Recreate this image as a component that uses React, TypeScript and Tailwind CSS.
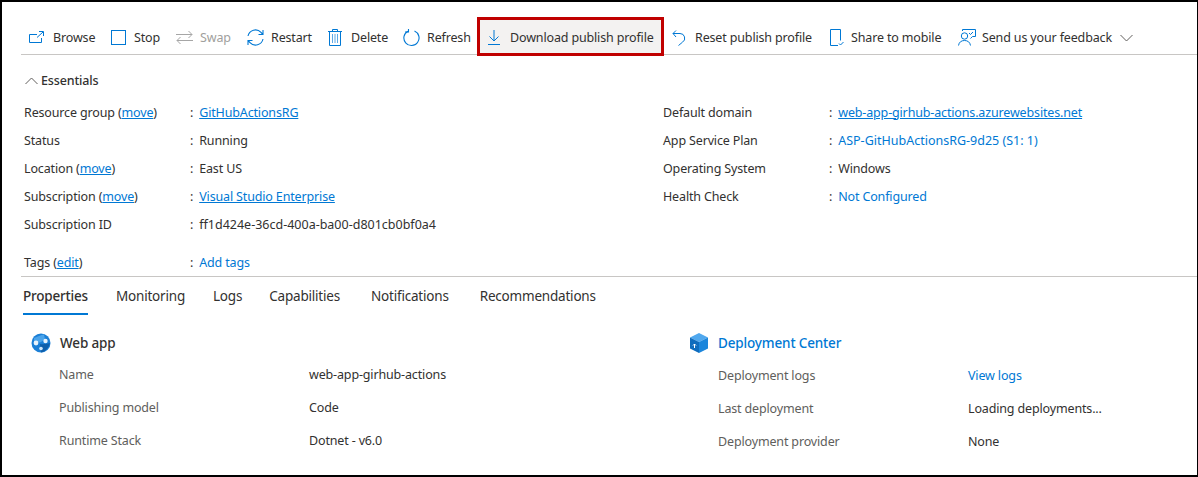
const link = "text-[#0078d4]";
const linkU = "text-[#0078d4] underline";

function BrowseIcon() {
  return (
    <svg width="15" height="13" viewBox="0 0 15 13" fill="none" stroke="#0078d4" strokeWidth="1">
      <path d="M8 3.500H.5v8h12V7" />
      <path d="M8 6.500 14 1M10 .5h4.500V5" />
    </svg>
  );
}
function StopIcon() {
  return (
    <svg width="15" height="15" viewBox="0 0 15 15" fill="none" stroke="#0078d4">
      <rect x=".5" y=".5" width="14" height="14" />
    </svg>
  );
}
function SwapIcon() {
  return (
    <svg width="17" height="15" viewBox="0 0 17 15" fill="none" stroke="#a6a6a6">
      <path d="M0 4.500h16M12.500 1 16 4.500 12.500 8M17 10.500H1M4.500 7 1 10.500 4.500 14" />
    </svg>
  );
}
function RestartIcon() {
  return (
    <svg width="17" height="17" viewBox="0 0 17 17" fill="none" stroke="#0078d4" strokeWidth="1.1">
      <path d="M1 7a7.600 7.600 0 0 1 13-3.600l1.500 1.600M16 1v4.500h-4.500" />
      <path d="M16 10a7.600 7.600 0 0 1-13 3.600L1.500 12M1 16v-4.500h4.500" />
    </svg>
  );
}
function DeleteIcon() {
  return (
    <svg width="14" height="17" viewBox="0 0 14 17" fill="none" stroke="#0078d4">
      <path d="M0 2.500h14M4.500 2.500V.5h5v2M1.500 2.500v14h11v-14" />
      <path d="M4.500 5v9M7 5v9M9.500 5v9" stroke="#5ea9e6" />
    </svg>
  );
}
function RefreshIcon() {
  return (
    <svg width="17" height="18" viewBox="0 0 17 18" fill="none" stroke="#0078d4" strokeWidth="1.1">
      <path d="M5 2.200a7.600 7.600 0 1 0 6.500-.2" />
      <path d="M5.500 0v3H2" />
    </svg>
  );
}
function DownloadIcon() {
  return (
    <svg width="12" height="15" viewBox="0 0 12 15" fill="none" stroke="#0078d4">
      <path d="M6 0v10.500M1.500 6.500 6 11l4.500-4.500M0 14.500h12" />
    </svg>
  );
}
function ResetIcon() {
  return (
    <svg width="14" height="16" viewBox="0 0 14 16" fill="none" stroke="#0078d4">
      <path d="M1 3.500h7a4.700 4.700 0 0 1 2.500 8.700L6.500 15.500" />
      <path d="M4 .5 1 3.500 4 7" />
    </svg>
  );
}
function MobileIcon() {
  return (
    <svg width="14" height="17" viewBox="0 0 14 17" fill="none" stroke="#0078d4">
      <path d="M8 16.500H.5V.5h10v11" />
      <path d="m9 14.500 1.500 1.500 3-3" />
    </svg>
  );
}
function FeedbackIcon() {
  return (
    <svg width="18" height="17" viewBox="0 0 18 17" fill="none" stroke="#0078d4">
      <path d="M4.500 2V.5h13v7h-3l-2 2" />
      <circle cx="6.500" cy="7" r="3.200" />
      <path d="M.5 16.500c.5-3.500 3-5 6-5s5.500 1.500 6 5" />
      <path d="m11 4 1.500 1.500 2.500-2.500" />
    </svg>
  );
}
function WebAppIcon() {
  return (
    <svg width="20" height="20" viewBox="0 0 20 20">
      <circle cx="10" cy="10" r="9.500" fill="#1b7fd6" />
      <path d="M3 5c3-1 7-3 10-3.500l1 5-5 3-6-1z" fill="#4aa3ea" />
      <path d="M9 11c3 .5 7 0 10-1-1 5-5 9-9 9.500z" fill="#0f5fab" />
      <circle cx="5" cy="10" r="2.400" fill="#e8f3fc" />
      <circle cx="14.500" cy="8" r="2.200" fill="#e8f3fc" />
      <circle cx="10" cy="15.500" r="1.800" fill="#cfe6f9" />
    </svg>
  );
}
function DeployIcon() {
  return (
    <svg width="18" height="20" viewBox="0 0 18 20">
      <path d="M9 0 18 4.500 9 9 0 4.500z" fill="#50a8ee" />
      <path d="M0 4.500 9 9v11L0 15.500z" fill="#0f6cbd" />
      <path d="M18 4.500 9 9v11l9-4.500z" fill="#1b86dc" />
      <path d="M4.500 15V11M3 12.500l1.500-1.500 1.500 1.500" fill="none" stroke="#fff" />
    </svg>
  );
}
function Chevron({ up }: { up?: boolean }) {
  return (
    <svg width="13" height="8" viewBox="0 0 13 8" fill="none" stroke="#605e5c">
      <path d={up ? "M.5 7 6.500 1l6 6" : "M.5 1l6 6 6-6"} />
    </svg>
  );
}

function ToolButton({
  icon,
  label,
  widthClass,
  gapClass,
  disabled,
}: {
  icon: React.ReactNode;
  label: string;
  widthClass: string;
  gapClass: string;
  disabled?: boolean;
}) {
  return (
    <button className={`flex items-center h-[33px] shrink-0 whitespace-nowrap ${widthClass} ${gapClass} ${disabled ? "text-[#a19f9d]" : "text-[#323130]"}`}>
      {icon}
      <span className="pt-[2px]">{label}</span>
    </button>
  );
}

function Row({ label, children }: { label: React.ReactNode; children: React.ReactNode }) {
  return (
    <div className="flex h-[28px] items-center">
      <div className="w-[166px] shrink-0">{label}</div>
      <div className="flex gap-[6px]">
        <span>:</span>
        <span>{children}</span>
      </div>
    </div>
  );
}

function Prop({ label, children }: { label: string; children: React.ReactNode }) {
  return (
    <div className="flex h-[33px] items-center">
      <div className="w-[250px] shrink-0 text-[#605e5c]">{label}</div>
      <div>{children}</div>
    </div>
  );
}

export default function App() {
  return (
    <div
      className="w-[1198px] h-[477px] overflow-hidden bg-white border-2 border-black border-r-[1px] text-[#323130] text-[12.5px] tracking-[-0.15px]"
      style={{ fontFamily: '"Noto Sans", sans-serif' }}
    >
      <div className="ml-[19px] h-[53px] border-b border-[#c8c6c4] flex items-end pb-[1px]">
        <div className="flex items-center h-[33px] ml-[8px] mb-[-1px]">
          <ToolButton icon={<BrowseIcon />} label="Browse" widthClass="w-[82px]" gapClass="gap-[9px]" />
          <ToolButton icon={<StopIcon />} label="Stop" widthClass="w-[65px]" gapClass="gap-[8px]" />
          <ToolButton icon={<SwapIcon />} label="Swap" widthClass="w-[71px]" gapClass="gap-[7px]" disabled />
          <ToolButton icon={<RestartIcon />} label="Restart" widthClass="w-[81px]" gapClass="gap-[7px]" />
          <ToolButton icon={<DeleteIcon />} label="Delete" widthClass="w-[75px]" gapClass="gap-[9px]" />
          <ToolButton icon={<RefreshIcon />} label="Refresh" widthClass="w-[74px]" gapClass="gap-[7px]" />
          <button className="flex items-center gap-[10px] w-[187px] h-[39px] shrink-0 pl-[8px] pt-[3px] border-[3px] border-[#c00000] bg-[#f3f2f1] whitespace-nowrap mb-[-1px] mt-[-4px] relative">
            <DownloadIcon />
            <span className="pt-[2px]">Download publish profile</span>
          </button>
          <div className="w-[8px] shrink-0" />
          <ToolButton icon={<ResetIcon />} label="Reset publish profile" widthClass="w-[158px]" gapClass="gap-[9px]" />
          <ToolButton icon={<MobileIcon />} label="Share to mobile" widthClass="w-[128px]" gapClass="gap-[7px]" />
          <ToolButton
            icon={<FeedbackIcon />}
            label="Send us your feedback"
            widthClass="w-[162px]"
            gapClass="gap-[6px]"
          />
          <Chevron />
        </div>
      </div>

      <div className="ml-[19px] h-[222px] border-b border-[#c8c6c4] flex flex-col">
        <div className="flex items-center gap-[3px] h-[24px] shrink-0 mt-[14px] ml-[4px]">
          <Chevron up />
          <span className="font-medium">Essentials</span>
        </div>
        <div className="flex shrink-0 mt-[6px] ml-[3px]">
          <div className="w-[639px] shrink-0">
            <Row label={<>Resource group (<a className={linkU}>move</a>)</>}>
              <a className={linkU}>GitHubActionsRG</a>
            </Row>
            <Row label="Status">Running</Row>
            <Row label={<>Location (<a className={linkU}>move</a>)</>}>East US</Row>
            <Row label={<>Subscription (<a className={linkU}>move</a>)</>}>
              <a className={linkU}>Visual Studio Enterprise</a>
            </Row>
            <Row label="Subscription ID">
              <span className="tracking-[0px]">ff1d424e-36cd-400a-ba00-d801cb0bf0a4</span>
            </Row>
            <div className="h-[10px]" />
            <Row label={<>Tags (<a className={linkU}>edit</a>)</>}>
              <a className={link}>Add tags</a>
            </Row>
          </div>
          <div>
            <Row label="Default domain">
              <a className={linkU}>web-app-girhub-actions.azurewebsites.net</a>
            </Row>
            <Row label="App Service Plan">
              <a className={`${link} tracking-[0px]`}>ASP-GitHubActionsRG-9d25 (S1: 1)</a>
            </Row>
            <Row label="Operating System">Windows</Row>
            <Row label="Health Check">
              <a className={link}>Not Configured</a>
            </Row>
          </div>
        </div>
      </div>

      <div className="ml-[21px] flex items-start h-[38px] text-[13.5px] tracking-[-0.2px]">
        <div className="h-[38px] w-[65px] border-b-2 border-[#0078d4] flex items-center font-medium whitespace-nowrap mr-[28px] pt-[2px]">
          Properties
        </div>
        <div className="flex h-[38px] items-center">
          <span className="mr-[28px]">Monitoring</span>
          <span className="mr-[27px]">Logs</span>
          <span className="mr-[31px]">Capabilities</span>
          <span className="mr-[31px]">Notifications</span>
          <span>Recommendations</span>
        </div>
      </div>

      <div className="flex mt-[16px]">
        <div className="w-[659px] ml-[29px] shrink-0">
          <div className="flex items-center gap-[9px] h-[24px] text-[13.5px] font-medium">
            <WebAppIcon />
            <span>Web app</span>
          </div>
          <div className="ml-[28px] mt-[4px]">
            <Prop label="Name">web-app-girhub-actions</Prop>
            <Prop label="Publishing model">Code</Prop>
            <Prop label="Runtime Stack">Dotnet - v6.0</Prop>
          </div>
        </div>
        <div>
          <div className="flex items-center gap-[10px] h-[24px] text-[13.5px] font-medium text-[#0078d4]">
            <DeployIcon />
            <span>Deployment Center</span>
          </div>
          <div className="ml-[28px] mt-[5px]">
            <Prop label="Deployment logs">
              <a className={link}>View logs</a>
            </Prop>
            <Prop label="Last deployment">Loading deployments...</Prop>
            <Prop label="Deployment provider">None</Prop>
          </div>
        </div>
      </div>
    </div>
  );
}
